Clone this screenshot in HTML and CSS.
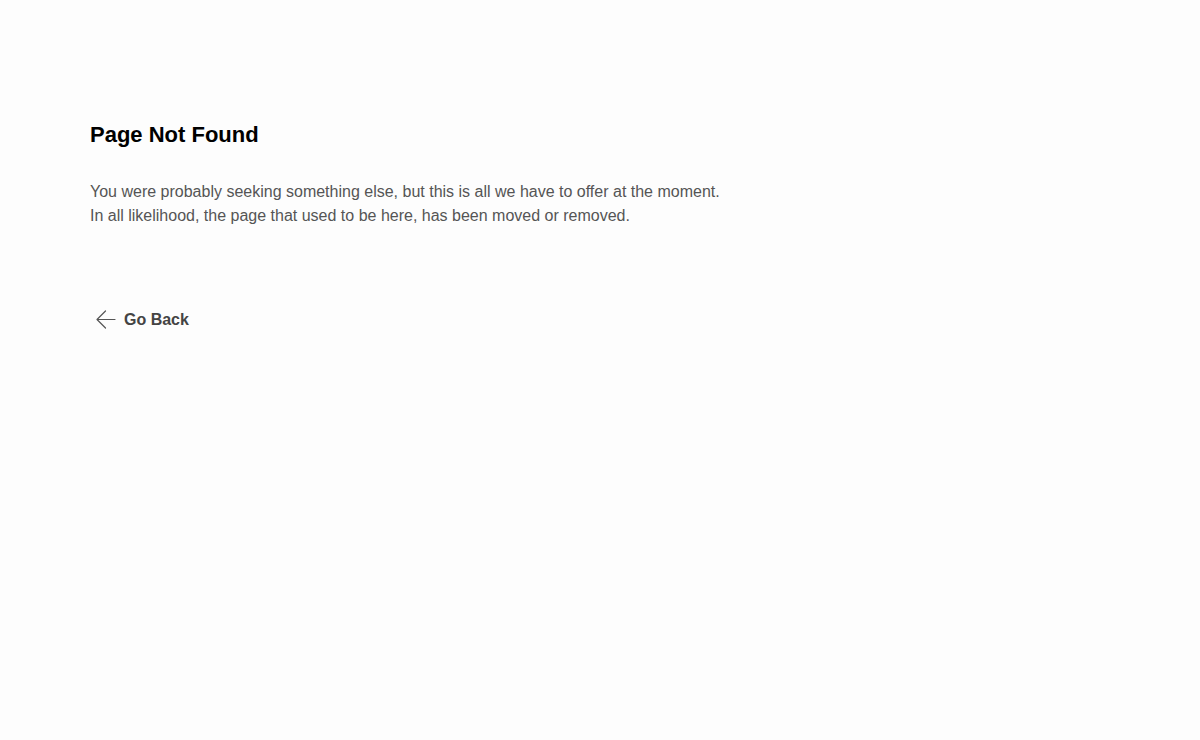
FILE: index.html
```html
<!DOCTYPE html>
<html>
<head>
<meta charset="utf-8">
<link rel="stylesheet" href="styles.css">
</head>
<body>
<main class="page">
  <h1 class="title">Page Not Found</h1>
  <p class="desc">You were probably seeking something else, but this is all we have to offer at the moment.<br>In all likelihood, the page that used to be here, has been moved or removed.</p>
  <a class="back" href="#">
    <svg class="arrow" width="22" height="20" viewBox="0 0 22 20" fill="none" stroke="#555" stroke-width="1.2" stroke-linecap="round" stroke-linejoin="round"><path d="M20 9.5H2M10.5 1L2 9.5L10.5 18"/></svg>
    <span>Go Back</span>
  </a>
</main>
</body>
</html>
```
FILE: styles.css
```css
html, body {
  margin: 0;
  padding: 0;
  background: #fdfdfd;
}
body {
  font-family: "Liberation Sans", Arial, sans-serif;
}
.page {
  padding: 122px 90px 0;
  display: flex;
  flex-direction: column;
  align-items: flex-start;
}
.title {
  margin: 0;
  font-size: 22px;
  line-height: 26px;
  font-weight: bold;
  color: #000;
}
.desc {
  margin: 32px 0 0;
  font-size: 16px;
  line-height: 24px;
  color: #555;
}
.back {
  margin-top: 82px;
  display: flex;
  align-items: center;
  gap: 7px;
  padding-left: 5px;
  text-decoration: none;
  color: #444;
  font-size: 16px;
  font-weight: bold;
}
.arrow {
  display: block;
}
```
